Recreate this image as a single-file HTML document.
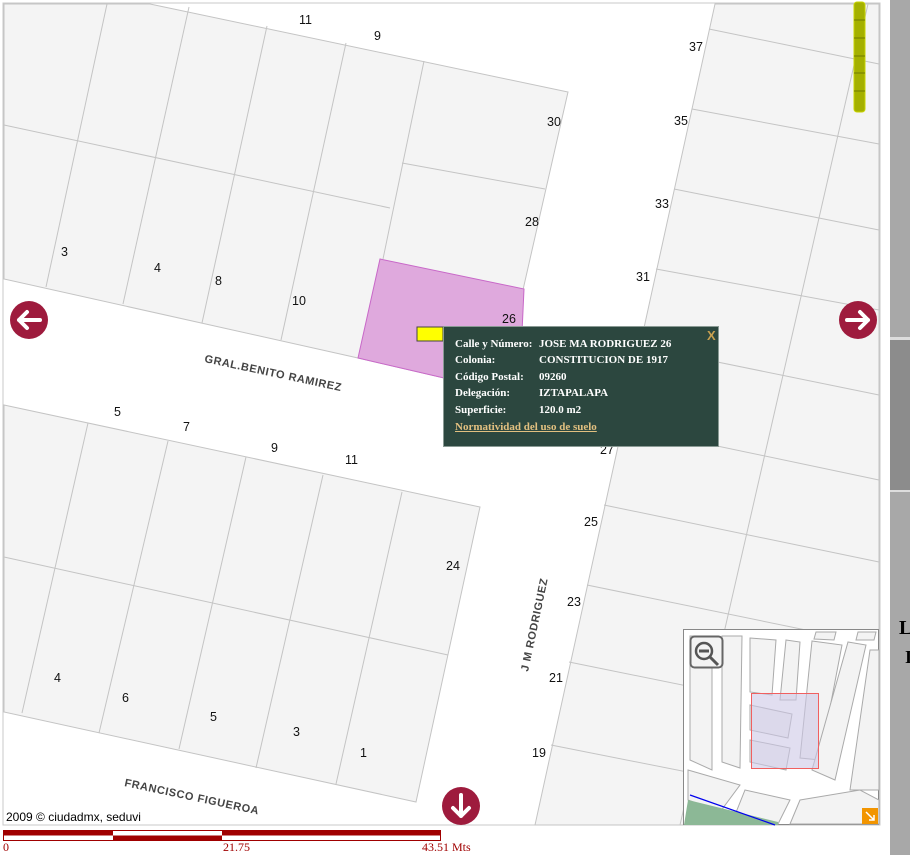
<!DOCTYPE html>
<html><head><meta charset="utf-8"><style>
html,body{margin:0;padding:0;background:#fff;width:910px;height:855px;overflow:hidden;position:relative;font-family:"Liberation Sans",sans-serif}
.pop{position:absolute;left:443px;top:326px;width:274px;height:119px;background:#2c473f;border:1px solid #8a9a94;font-family:"Liberation Serif",serif;font-weight:bold;font-size:11px;color:#fff}
.pop div{position:absolute;left:11px;white-space:nowrap}
.pop span{position:absolute;left:84px}
.lbl{position:absolute;font-family:"Liberation Serif",serif;font-size:12px;color:#a00000;top:840px}
</style></head><body>
<svg width="910" height="855" style="position:absolute;left:0;top:0" xmlns="http://www.w3.org/2000/svg">
<rect x="3" y="3" width="877" height="822" fill="#fff" stroke="#c8c8c8"/>
<g fill="#f4f4f4" stroke="#c4c4c4" stroke-width="1">
<polygon points="4,4 150,4 568,92 520,303 444,378 358,358 4,279"/>
<polygon points="4,405 480,507 416,802 4,712"/>
<polygon points="715,4 879,4 879,825 535,825"/>
</g>
<g stroke="#c4c4c4" stroke-width="1" fill="none">
<line x1="4" y1="125" x2="390" y2="208"/><line x1="402" y1="163" x2="545" y2="189"/>
<line x1="107" y1="4" x2="46" y2="287"/><line x1="189" y1="7" x2="123" y2="304"/>
<line x1="267" y1="26" x2="202" y2="323"/><line x1="346" y1="43" x2="281" y2="340"/>
<line x1="424" y1="61" x2="383" y2="259"/>
<line x1="4" y1="557" x2="448" y2="655"/>
<line x1="88" y1="423" x2="22" y2="713"/><line x1="168" y1="441" x2="99" y2="733"/>
<line x1="246" y1="457" x2="179" y2="749"/><line x1="323" y1="475" x2="256" y2="768"/>
<line x1="402" y1="492" x2="336" y2="784"/>
<line x1="868" y1="4" x2="680" y2="825"/>
<line x1="709" y1="29" x2="879" y2="64"/><line x1="692" y1="109" x2="879" y2="144"/>
<line x1="674" y1="189" x2="879" y2="230"/><line x1="656" y1="269" x2="879" y2="310"/>
<line x1="639" y1="346" x2="879" y2="395"/><line x1="622" y1="426" x2="879" y2="480"/>
<line x1="604" y1="505" x2="879" y2="562"/><line x1="587" y1="585" x2="879" y2="645"/>
<line x1="569" y1="662" x2="879" y2="725"/><line x1="551" y1="745" x2="879" y2="810"/>
</g>
<polygon points="380,259 524,289 520,376 444,378 358,358" fill="#dfa9dd" stroke="#c868c8"/>
<g font-family="Liberation Sans,sans-serif" font-size="12.5" fill="#111">
<text x="299" y="24">11</text><text x="374" y="40">9</text><text x="689" y="51">37</text>
<text x="547" y="126">30</text><text x="674" y="125">35</text><text x="655" y="208">33</text>
<text x="525" y="226">28</text><text x="636" y="281">31</text><text x="61" y="256">3</text>
<text x="154" y="272">4</text><text x="215" y="285">8</text><text x="292" y="305">10</text>
<text x="502" y="323">26</text><text x="618" y="379">29</text><text x="600" y="454">27</text>
<text x="114" y="416">5</text><text x="183" y="431">7</text><text x="271" y="452">9</text>
<text x="345" y="464">11</text><text x="446" y="570">24</text><text x="584" y="526">25</text>
<text x="567" y="606">23</text><text x="549" y="682">21</text><text x="532" y="757">19</text>
<text x="54" y="682">4</text><text x="122" y="702">6</text><text x="210" y="721">5</text>
<text x="293" y="736">3</text><text x="360" y="757">1</text>
</g>
<g font-family="Liberation Sans,sans-serif" font-size="11" font-weight="bold" fill="#444" letter-spacing="0.6">
<text transform="translate(204,362) rotate(12)">GRAL.BENITO RAMIREZ</text>
<text transform="translate(124,786) rotate(12)">FRANCISCO FIGUEROA</text>
<text transform="translate(528,672) rotate(-78)">J M RODRIGUEZ</text>
</g>
<text x="6" y="821" font-family="Liberation Sans,sans-serif" font-size="12" fill="#000">2009 © ciudadmx, seduvi</text>
<rect x="854" y="2" width="11" height="110" rx="3" fill="#a4b000" stroke="#c8d400"/>
<g stroke="#6f7a00"><line x1="854" y1="20" x2="865" y2="20"/><line x1="854" y1="38" x2="865" y2="38"/><line x1="854" y1="56" x2="865" y2="56"/><line x1="854" y1="73" x2="865" y2="73"/><line x1="854" y1="91" x2="865" y2="91"/></g>
<g fill="#9e1b3d"><circle cx="29" cy="320" r="19"/><circle cx="858" cy="320" r="19"/><circle cx="461" cy="806" r="19"/></g>
<g stroke="#fff" stroke-width="4" fill="none" stroke-linecap="round" stroke-linejoin="round">
<path d="M40 320H19M27 312l-8 8 8 8"/><path d="M847 320h21M860 312l8 8-8 8"/><path d="M461 795v21M453 808l8 8 8-8"/></g>
<rect x="417" y="327" width="26" height="14" fill="#ffff00" stroke="#444"/>
<rect x="890" y="0" width="20" height="855" fill="#a8a8a8"/>
<rect x="890" y="337" width="20" height="153" fill="#8c8c8c"/>
<rect x="890" y="337" width="20" height="3" fill="#ddd"/><rect x="890" y="490" width="20" height="2" fill="#ddd"/>
<text x="899" y="634" font-family="Liberation Serif,serif" font-weight="bold" font-size="20" fill="#000">L</text>
<text x="905" y="663" font-family="Liberation Serif,serif" font-weight="bold" font-size="18" fill="#000">I</text>
<g>
<rect x="683.5" y="629.5" width="195" height="195" fill="#fff" stroke="#888"/>
<g fill="#f3f3f3" stroke="#aaa" stroke-width="1">
<polygon points="690,636 712,636 712,770 690,760"/>
<polygon points="722,636 742,636 740,768 722,762"/>
<polygon points="750,638 776,640 772,695 750,692"/>
<polygon points="786,640 800,642 796,700 780,700"/>
<polygon points="812,641 842,645 820,760 800,758"/>
<polygon points="816,632 836,632 834,640 814,639"/>
<polygon points="848,642 866,645 835,780 812,770"/>
<polygon points="858,632 876,632 874,640 856,640"/>
<polygon points="870,650 879,650 879,790 850,790"/>
<polygon points="750,705 792,714 788,738 750,730"/>
<polygon points="750,740 790,748 786,770 750,762"/>
<polygon points="688,770 740,785 720,812 688,800"/>
<polygon points="745,790 790,800 778,824 735,815"/>
<polygon points="800,800 860,790 879,800 879,824 790,824"/>
</g>
<path d="M688 800l90 22v3h-94z" fill="#8cb896"/>
<path d="M690 795l85 30" stroke="#0000ee" stroke-width="1.2"/>
<rect x="751.5" y="693.5" width="67" height="75" fill="rgba(205,200,230,.6)" stroke="#f06060"/>
<rect x="690.5" y="636.5" width="32" height="31" rx="4" fill="#f3f3f3" stroke="#666" stroke-width="2"/>
<circle cx="704" cy="651" r="8" fill="none" stroke="#555" stroke-width="2.5"/><path d="M699 651h10M710 657l8 8" stroke="#555" stroke-width="3"/>
<rect x="862" y="808" width="16" height="16" fill="#f29500"/><path d="M866 812l8 8M874 815v5h-5" stroke="#fff" stroke-width="1.5" fill="none"/>
</g>
<rect x="3.5" y="830.5" width="437" height="10" fill="#fff" stroke="#a00000"/>
<rect x="4" y="831" width="109" height="4.5" fill="#a00000"/>
<rect x="113" y="835.5" width="109" height="4.5" fill="#a00000"/>
<rect x="222" y="831" width="218" height="4.5" fill="#a00000"/>
</svg>
<div class="pop">
<div style="top:11px">Calle y Número:<span>JOSE MA RODRIGUEZ 26</span></div>
<div style="top:27px">Colonia:<span>CONSTITUCION DE 1917</span></div>
<div style="top:44px">Código Postal:<span>09260</span></div>
<div style="top:60px">Delegación:<span>IZTAPALAPA</span></div>
<div style="top:77px">Superficie:<span>120.0 m2</span></div>
<div style="top:94px;color:#e2c080;text-decoration:underline">Normatividad del uso de suelo</div>
<div style="left:263px;top:1px;color:#c8a050;font-family:'Liberation Sans',sans-serif;font-size:13px">X</div>
</div>
<div class="lbl" style="left:3px">0</div>
<div class="lbl" style="left:223px">21.75</div>
<div class="lbl" style="left:422px">43.51 Mts</div>
</body></html>
